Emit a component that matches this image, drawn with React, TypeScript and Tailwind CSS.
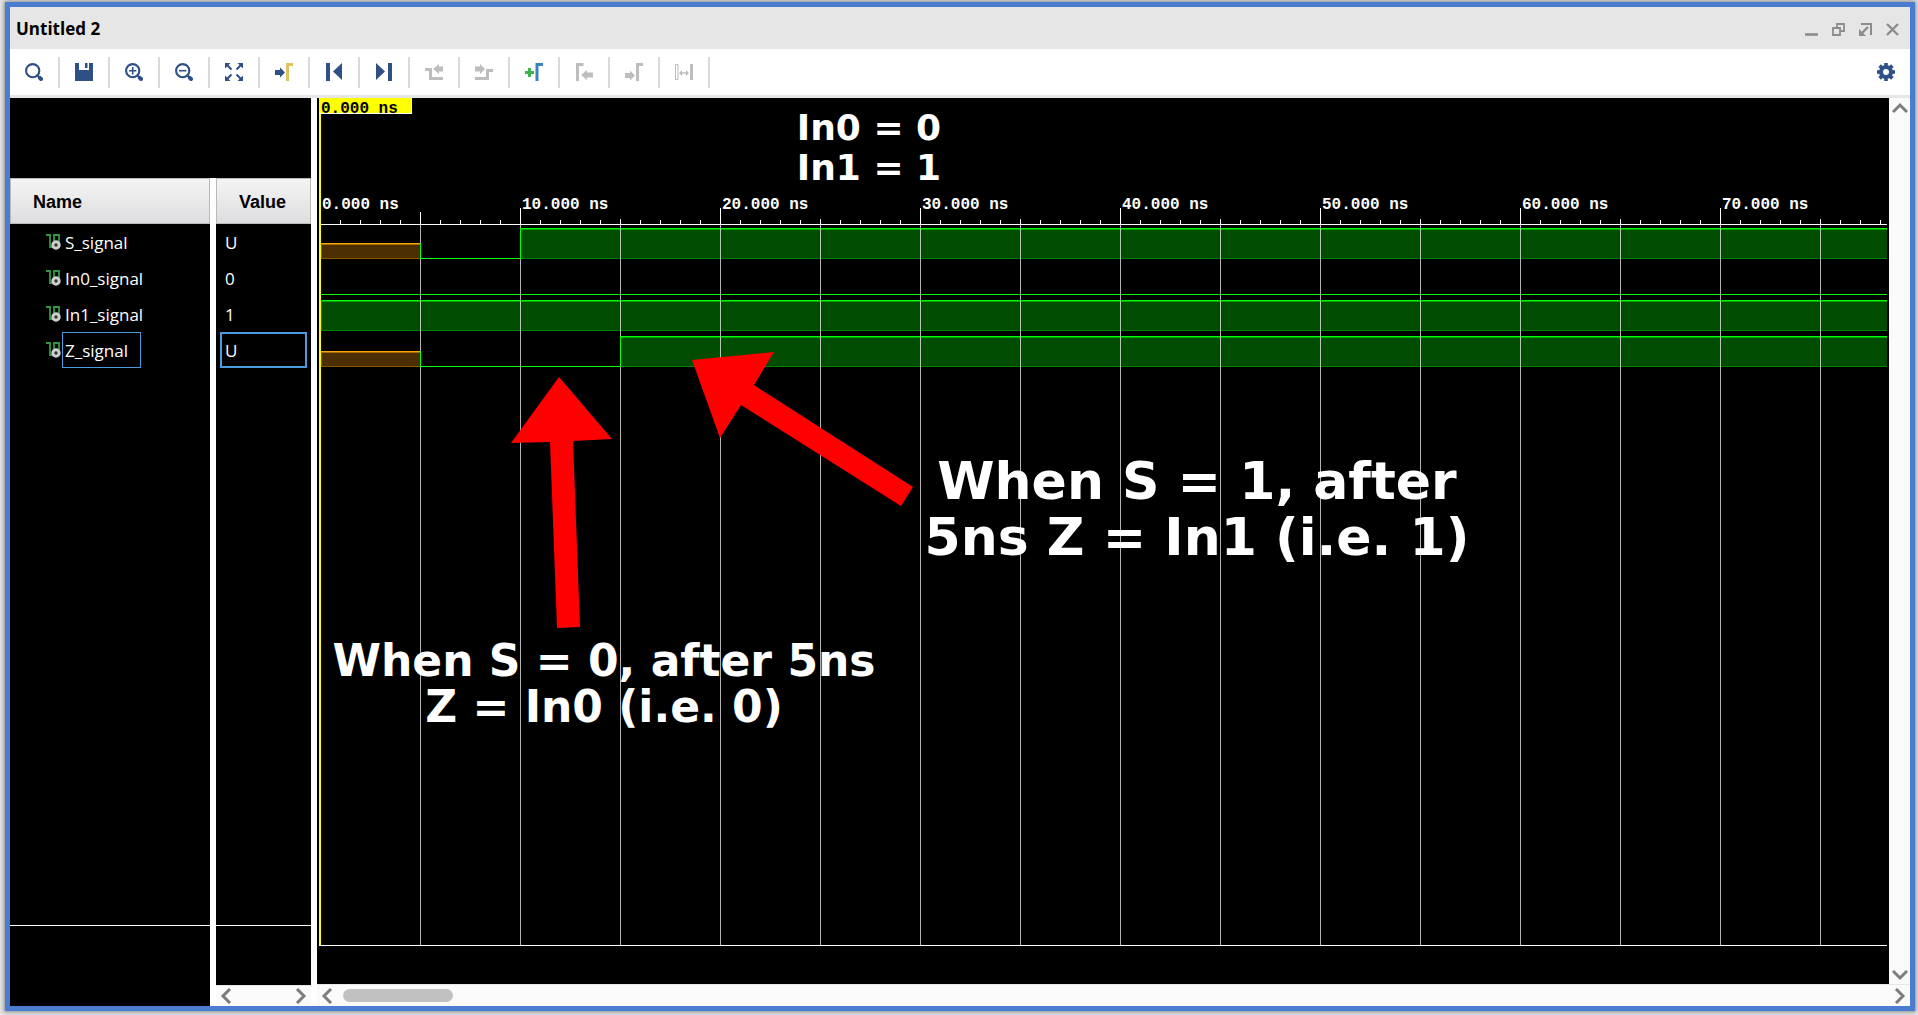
import { useEffect, useState, type ReactNode } from "react";

const NAVY = "#2f4f87";
const GREY = "#bdbdbd";

function Icon({ children, size = 18 }: { children: ReactNode; size?: number }) {
  return (
    <svg width={size} height={size} viewBox={`0 0 ${size} ${size}`} fill="none" aria-hidden="true">
      {children}
    </svg>
  );
}

function Lens({ children }: { children?: ReactNode }) {
  return (
    <Icon>
      <circle cx="7.7" cy="7.7" r="6.6" stroke={NAVY} strokeWidth="2.1" />
      <path d="M12.5 12.5 14 14" stroke={NAVY} strokeWidth="2" />
      <path d="M14.8 14.8 16 16" stroke={NAVY} strokeWidth="4" strokeLinecap="round" />
      {children}
    </Icon>
  );
}

const tools: { label: string; disabled?: boolean; icon: ReactNode }[] = [
  { label: "Search", icon: <Lens /> },
  {
    label: "Save",
    icon: (
      <Icon>
        <path d="M0 0h4v7h10V0h4v18H0z" fill={NAVY} />
        <path d="M10 0h2.5v5H10z" fill={NAVY} />
      </Icon>
    ),
  },
  {
    label: "Zoom in",
    icon: (
      <Lens>
        <path d="M4 7.7h7.4M7.7 4v7.4" stroke={NAVY} strokeWidth="1.6" />
      </Lens>
    ),
  },
  {
    label: "Zoom out",
    icon: (
      <Lens>
        <path d="M4 7.7h7.4" stroke={NAVY} strokeWidth="1.6" />
      </Lens>
    ),
  },
  {
    label: "Zoom fit",
    icon: (
      <Icon>
        <path d="M0 0h5.500L0 5.500zM18 0v5.500L12.500 0zM0 18v-5.500L5.500 18zM18 18h-5.500l5.500-5.500z" fill={NAVY} />
        <path d="m2 2 4.500 4.500M16 2l-4.500 4.500M2 16l4.500-4.500M16 16l-4.500-4.500" stroke={NAVY} strokeWidth="2" />
      </Icon>
    ),
  },
  {
    label: "Go to cursor",
    icon: (
      <Icon>
        <path d="M0 7h5V4.500L10 9.500 5 14.500V12H0z" fill={NAVY} />
        <path d="M12.500 18V1.500H18" stroke="#dfc363" strokeWidth="3" />
      </Icon>
    ),
  },
  {
    label: "Go to start",
    icon: (
      <Icon>
        <path d="M1 0h4v18H1zM17 0v17L8 8.500z" fill={NAVY} />
      </Icon>
    ),
  },
  {
    label: "Go to end",
    icon: (
      <Icon>
        <path d="M13 0h4v18h-4zM1 0v17l9-8.500z" fill={NAVY} />
      </Icon>
    ),
  },
  {
    label: "Previous transition",
    disabled: true,
    icon: (
      <Icon>
        <path d="M0 6.500H5.500V15.500H18" stroke={GREY} strokeWidth="3" />
        <path d="M8 6l6-5v2.500h4v5h-4V11z" fill={GREY} />
      </Icon>
    ),
  },
  {
    label: "Next transition",
    disabled: true,
    icon: (
      <Icon>
        <path d="M0 15.500H12.500V7.500H18" stroke={GREY} strokeWidth="3" />
        <path d="M10 6 5 1v2.500H0v5h5V11z" fill={GREY} />
      </Icon>
    ),
  },
  {
    label: "Add marker",
    icon: (
      <Icon>
        <path d="M0 9.500h9M4.500 5v9" stroke="#3cb44a" strokeWidth="3" />
        <path d="M12 18V1.500h6" stroke="#3a83b8" strokeWidth="3" />
      </Icon>
    ),
  },
  {
    label: "Previous marker",
    disabled: true,
    icon: (
      <Icon>
        <path d="M2.500 18V1.500H8.500" stroke={GREY} strokeWidth="3" />
        <path d="M6 12l6-5v2.500h6v5h-6V17z" fill={GREY} />
      </Icon>
    ),
  },
  {
    label: "Next marker",
    disabled: true,
    icon: (
      <Icon>
        <path d="M12.500 18V1.500h6" stroke={GREY} strokeWidth="3" />
        <path d="M10 12.500 5 7.500V10H0v5h5v2.500z" fill={GREY} />
      </Icon>
    ),
  },
  {
    label: "Swap cursors",
    disabled: true,
    icon: (
      <Icon>
        <path d="M.500 1.500h2.500v15H.500z" stroke={GREY} strokeWidth="1" />
        <path d="M15 1h3v16h-3zM4 10l3-3v6zM14 10l-3-3v6z" fill={GREY} />
        <path d="M6 10h6" stroke={GREY} strokeWidth="1.400" />
      </Icon>
    ),
  },
];

const windowControls: { label: string; icon: ReactNode }[] = [
  { label: "Minimize", icon: <path d="M0 11.500h13" strokeWidth="2.600" /> },
  { label: "Restore", icon: <path d="M1 5h7v7H1zM5 5V1h7v7H8" strokeWidth="1.800" /> },
  {
    label: "Float",
    icon: (
      <>
        <path d="M2 1h10v11" strokeWidth="2" />
        <path d="M9 4 3 10" strokeWidth="2.400" />
        <path d="M0 6v7h7z" fill="#8c8c8c" stroke="none" />
      </>
    ),
  },
  { label: "Close", icon: <path d="m1 1 11 11M12 1 1 12" strokeWidth="2.400" /> },
];

const signals = [
  { name: "S_signal", value: "U", selected: false },
  { name: "In0_signal", value: "0", selected: false },
  { name: "In1_signal", value: "1", selected: false },
  { name: "Z_signal", value: "U", selected: true },
];

function SignalIcon() {
  return (
    <svg width="16" height="18" viewBox="0 0 16 18" fill="none" className="shrink-0" aria-hidden="true">
      <path d="M0 2h4v12h4V2h5v8" stroke="#2f9a45" strokeWidth="1.800" />
      <circle cx="10" cy="12" r="3.200" stroke="#cfcfcf" strokeWidth="3" fill="#333" />
    </svg>
  );
}

const chevrons = {
  left: "M10 1 3 8l7 7",
  right: "m6 1 7 7-7 7",
  up: "m1 12 7-7 7 7",
  down: "m1 5 7 7 7-7",
};

function ScrollButton({ dir, label }: { dir: keyof typeof chevrons; label: string }) {
  return (
    <button type="button" aria-label={label} className="flex size-5 shrink-0 items-center justify-center">
      <svg width="16" height="16" viewBox="0 0 16 16" fill="none" aria-hidden="true">
        <path d={chevrons[dir]} stroke="#7c7c7c" strokeWidth="3" />
      </svg>
    </button>
  );
}

/* Time scale: 20 px per nanosecond, time zero at x = 1. */
const timeX = (ns: number) => 1 + ns * 20;

/* Width left for the wave area once the signal columns and scroll bar are placed. */
const SIDE_WIDTH = 350;

function useVisibleWidth() {
  const [width, setWidth] = useState(() => window.innerWidth - SIDE_WIDTH);
  useEffect(() => {
    const onResize = () => setWidth(window.innerWidth - SIDE_WIDTH);
    window.addEventListener("resize", onResize);
    return () => window.removeEventListener("resize", onResize);
  }, []);
  return Math.max(width, 100);
}

function High({ from, y }: { from: number; y: number }) {
  const x = from === 0 ? 2 : timeX(from);
  return (
    <g>
      <rect x={x} y={y} width="100%" height="31" fill="#004c00" />
      <rect x={x} y={y + 30} width="100%" height="1" fill="#008000" />
      <rect x={x} y={y + 1} width="100%" height="1" fill="#00a800" />
      <rect x={x} y={y} width="100%" height="1" fill="#00ff00" />
      <rect x={x} y={y} width="1" height="31" fill={from === 0 ? "#008000" : "#00ff00"} />
    </g>
  );
}

function Unknown({ y }: { y: number }) {
  return (
    <g>
      <rect x="2" y={y + 15} width="99" height="16" fill="#4c2f00" />
      <rect x="2" y={y + 30} width="99" height="1" fill="#8a5500" />
      <rect x="2" y={y + 16} width="99" height="1" fill="#a86c00" />
      <rect x="2" y={y + 15} width="99" height="1" fill="#ffa500" />
      <rect x="2" y={y + 16} width="1" height="15" fill="#8a5500" />
    </g>
  );
}

function Waveforms() {
  const width = useVisibleWidth();
  const ticks = Array.from({ length: Math.floor(width / 20) }, (_, i) => i + 1);
  const labels = Array.from({ length: Math.floor((width - 90) / 200) + 1 }, (_, i) => i * 10);
  return (
    <svg className="absolute inset-0 size-full" shapeRendering="crispEdges" role="img" aria-label="Signal waveforms">
      <Unknown y={130} />
      <rect x={timeX(5)} y="160" width="100" height="1" fill="#00ff00" />
      <High from={10} y={130} />
      <rect x="2" y="196" width="100%" height="1" fill="#00ff00" />
      <High from={0} y={202} />
      <Unknown y={238} />
      <rect x={timeX(5)} y="268" width="200" height="1" fill="#00ff00" />
      <High from={15} y={238} />
      {ticks.map((t) => {
        const top = t % 10 === 0 ? 110 : t === 5 ? 114 : t % 5 === 0 ? 121 : 122;
        return (
          <g key={t} fill="#fff">
            <rect x={timeX(t)} y={top} width="1" height={126 - top} />
            {t % 5 === 0 && <rect x={timeX(t)} y="127" width="1" height="100%" opacity="0.700" />}
          </g>
        );
      })}
      <rect x={timeX(5)} y="145" width="1" height="16" fill="#00ff00" />
      <rect x={timeX(5)} y="253" width="1" height="16" fill="#00ff00" />
      <rect x={timeX(10)} y="130" width="1" height="31" fill="#00ff00" />
      <rect x={timeX(15)} y="238" width="1" height="31" fill="#00ff00" />
      <rect x="0" y="126" width="100%" height="1" fill="#fff" />
      <g fill="#fff" fontFamily="'Liberation Mono', 'Courier New', monospace" fontSize="16" fontWeight="700">
        {labels.map((t) => (
          <text key={t} x={timeX(t) + 2} y="111">
            {t}.000 ns
          </text>
        ))}
      </g>
      <rect x="0" y="0" width="2" height="100%" fill="#ffff00" />
    </svg>
  );
}

export default function App() {
  return (
    <div className="h-screen overflow-hidden bg-[#e4e4e4] pt-[2px] pr-[3px] pb-1 pl-[5px] font-['Open_Sans','Segoe_UI',sans-serif] text-black">
      <main className="flex h-full flex-col border-[5px] border-[#4a7dcf] bg-white shadow-[0_0_4px_1px_#888]">
        <header className="flex h-[42px] shrink-0 items-center justify-between bg-[#e6e6e6] pr-[11px] pl-[6px]">
          <h1 className="pt-[2px] text-[17px] leading-6 font-bold">Untitled 2</h1>
          <div className="flex items-center gap-[14px] pt-[3px]">
            {windowControls.map((c) => (
              <button key={c.label} type="button" aria-label={c.label}>
                <svg width="13" height="13" viewBox="0 0 13 13" fill="none" stroke="#8c8c8c" aria-hidden="true">
                  {c.icon}
                </svg>
              </button>
            ))}
          </div>
        </header>

        <div role="toolbar" aria-label="Waveform tools" className="flex h-[49px] shrink-0 items-center justify-between border-b-[3px] border-[#e6e6e6] pr-[15px]">
          <div className="flex">
            {tools.map((t) => (
              <button
                key={t.label}
                type="button"
                aria-label={t.label}
                disabled={t.disabled}
                className="flex h-[31px] w-[50px] items-center justify-center border-r-2 border-[#d9d9d9]"
              >
                {t.icon}
              </button>
            ))}
          </div>
          <button type="button" aria-label="Settings">
            <Icon>
              {[0, 45, 90, 135].map((a) => (
                <path key={a} d="M9 0v18" stroke={NAVY} strokeWidth="3.600" transform={`rotate(${a} 9 9)`} />
              ))}
              <circle cx="9" cy="9" r="5" fill="#fff" stroke={NAVY} strokeWidth="4" />
            </Icon>
          </button>
        </div>

        <div className="flex min-h-0 flex-1 gap-[6px]">
          <section aria-label="Signals" className="flex w-[301px] shrink-0 flex-col">
            <div className="h-20 shrink-0 bg-black" />
            <table className="w-full table-fixed border-collapse text-left text-[17px]">
              <colgroup>
                <col className="w-[200px]" />
                <col className="w-[6px]" />
                <col className="w-[95px]" />
              </colgroup>
              <thead className="font-['Liberation_Sans',Arial,sans-serif] text-[18px]">
                <tr className="h-[46px]">
                  <th className="p-0">
                    <div className="flex h-[46px] items-center border border-[#b9b9b9] bg-linear-to-b from-[#f4f4f4] to-[#dedee0] pt-[2px] pl-[22px]">Name</div>
                  </th>
                  <td className="p-0" />
                  <th className="p-0">
                    <div className="flex h-[46px] items-center border border-[#b9b9b9] bg-linear-to-b from-[#f4f4f4] to-[#dedee0] pt-[2px] pl-[22px]">Value</div>
                  </th>
                </tr>
              </thead>
              <tbody className="text-white">
                {signals.map((s) => (
                  <tr key={s.name} className="h-9">
                    <td className="bg-black p-0">
                      <div className="flex h-9 items-center pl-9">
                        <SignalIcon />
                        <span className={s.selected ? "flex h-9 w-[79px] items-center border border-[#4a9be0] pt-[2px] pl-[2px]" : "pt-[2px] pl-[3px]"}>
                          {s.name}
                        </span>
                      </div>
                    </td>
                    <td className="p-0" />
                    <td className="bg-black px-1 py-0">
                      <div className={s.selected ? "flex h-9 items-center border-2 border-[#4a9be0] pt-[2px] pl-[3px]" : "flex h-9 items-center pt-[2px] pl-[5px]"}>
                        {s.value}
                      </div>
                    </td>
                  </tr>
                ))}
              </tbody>
            </table>
            <div className="flex min-h-0 flex-1 gap-[6px]">
              <div className="flex w-[200px] flex-col bg-black">
                <div className="flex-1 border-b border-white" />
                <div className="h-20" />
              </div>
              <div className="flex flex-1 flex-col bg-black">
                <div className="flex-1 border-b border-white" />
                <div className="h-[59px]" />
                <div className="flex h-[21px] items-center justify-between border-t border-[#e6e6e6] bg-[#fafafa] px-[2px]">
                  <ScrollButton dir="left" label="Scroll values left" />
                  <ScrollButton dir="right" label="Scroll values right" />
                </div>
              </div>
            </div>
          </section>

          <section aria-label="Waveform" className="flex min-w-0 flex-1 flex-col">
            <div className="flex min-h-0 flex-1">
              <div className="relative flex min-w-0 flex-1 flex-col overflow-hidden bg-black px-[2px]">
                <div className="relative flex-1 overflow-hidden border-b border-white">
                  <Waveforms />
                  <div className="absolute top-0 left-0 h-4 w-[93px] border-r border-b border-white bg-[#ffff00] pl-[2px] font-['Liberation_Mono','Courier_New',monospace] text-[16px] leading-[22px] font-bold text-black">
                    0.000 ns
                  </div>
                </div>
                <div className="h-[38px] shrink-0" />

                <svg className="pointer-events-none absolute top-0 left-0" width="620" height="560" viewBox="317 98 620 560" aria-hidden="true">
                  <path d="M559 377 612 439 573 441 580 627 557 628 550 442 511 443z" fill="#f00" />
                  <path d="M692 360 774 352 754 385 913 487 901 506 741 405 720 438z" fill="#f00" />
                </svg>
                <div className="absolute inset-0 text-center font-['DejaVu_Sans',Verdana,sans-serif] font-bold whitespace-nowrap text-white">
                  <p className="absolute top-[10px] left-[452px] w-[200px] text-[36px] leading-10">
                    In0 = 0<br />In1 = 1
                  </p>
                  <p className="absolute top-[540px] left-[7px] w-[560px] text-[44px] leading-[46px]">
                    When S = 0, after 5ns<br />Z = In0 (i.e. 0)
                  </p>
                  <p className="absolute top-[355px] left-[600px] w-[560px] text-[52px] leading-[56px]">
                    When S = 1, after<br />5ns Z = In1 (i.e. 1)
                  </p>
                </div>
              </div>
              <div className="flex w-[21px] shrink-0 flex-col items-center justify-between bg-[#fafafa]">
                <ScrollButton dir="up" label="Scroll up" />
                <ScrollButton dir="down" label="Scroll down" />
              </div>
            </div>
            <div className="flex h-[22px] shrink-0 items-center border-t border-[#e6e6e6] bg-[#fafafa] px-[2px]">
              <ScrollButton dir="left" label="Scroll left" />
              <div className="flex-1 px-1">
                <div className="h-[13px] w-[110px] rounded-full bg-[#c1c1c1]" />
              </div>
              <ScrollButton dir="right" label="Scroll right" />
            </div>
          </section>
        </div>
      </main>
    </div>
  );
}
